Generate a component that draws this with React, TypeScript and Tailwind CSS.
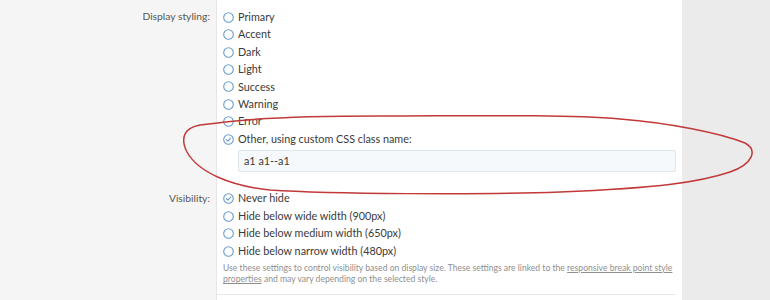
import React from "react";

const font = { fontFamily: 'Lato, "Noto Sans", Arial, sans-serif' };

function Radio({ checked }: { checked?: boolean }) {
  return (
    <svg width="11" height="11" viewBox="0 0 11 11" className="shrink-0">
      <circle cx="5.5" cy="5.5" r="4.8" fill="#fff" stroke="#6b9dc9" strokeWidth="1.1" />
      {checked && (
        <path d="M3.3 5.7 L4.9 7.2 L7.7 4.1" fill="none" stroke="#6b9dc9" strokeWidth="1.1" strokeLinecap="round" strokeLinejoin="round" />
      )}
    </svg>
  );
}

function Option({ label, checked }: { label: string; checked?: boolean }) {
  return (
    <div className="flex items-center h-[17.45px] gap-[4px]">
      <Radio checked={checked} />
      <span className="text-[10.8px] text-[#3a3a3a] leading-none">{label}</span>
    </div>
  );
}

export default function App() {
  return (
    <div className="relative w-[770px] h-[300px] overflow-hidden flex bg-[#ebebeb]" style={font}>
      <div className="w-[682px] h-full flex flex-col bg-white">
        <div className="flex">
          <div className="w-[217px] shrink-0 bg-[#f5f5f5] border-r border-[#e6e6e6] pr-[6px] pt-[8px] text-right">
            <div className="h-[17.45px] flex items-center justify-end text-[10.3px] text-[#555]">Display styling:</div>
          </div>
          <div className="flex-1 pl-[6px] pt-[8.5px] pb-[18px]">
            <Option label="Primary" />
            <Option label="Accent" />
            <Option label="Dark" />
            <Option label="Light" />
            <Option label="Success" />
            <Option label="Warning" />
            <Option label="Error" />
            <Option label="Other, using custom CSS class name:" checked />
            <div className="ml-[15px] mt-[2px] w-[438px] h-[22px] border border-[#dfe6ec] bg-[#f6f9fb] rounded-[2px] flex items-center pl-[5px] text-[10.8px] text-[#3a3a3a]">
              a1 a1--a1
            </div>
          </div>
        </div>
        <div className="flex flex-1">
          <div className="w-[217px] shrink-0 bg-[#f5f5f5] border-r border-[#e6e6e6] pr-[6px] text-right">
            <div className="h-[17.45px] flex items-center justify-end text-[10.3px] text-[#555]">Visibility:</div>
          </div>
          <div className="flex-1 pl-[6px] pr-[6px] flex flex-col">
            <Option label="Never hide" checked />
            <Option label="Hide below wide width (900px)" />
            <Option label="Hide below medium width (650px)" />
            <Option label="Hide below narrow width (480px)" />
            <p className="mt-[3px] text-[8.6px] leading-[11.4px] text-[#8f8f8f]">
              Use these settings to control visibility based on display size. These settings are linked to the{" "}
              <span className="underline">responsive break point style properties</span> and may vary depending on the selected style.
            </p>
            <div className="mt-auto mb-[5px] border-t border-[#e8e8e8] -ml-[6px]" />
          </div>
        </div>
      </div>
      <svg className="absolute left-0 top-0 pointer-events-none" width="770" height="300" viewBox="0 0 770 300">
        <path
          d="M214 123.5 C 250 118, 300 116, 380 116 C 460 116, 560 114, 620 119 C 670 123, 720 133, 745 143 C 758 150, 753 164, 730 172 C 700 182, 660 188, 560 192 C 480 195, 330 194, 270 190 C 230 186, 198 172, 187 152 C 180 138, 184 128, 200 125 L 222 122.5"
          fill="none"
          stroke="#c2393a"
          strokeWidth="1.5"
          strokeLinecap="round"
        />
      </svg>
    </div>
  );
}
